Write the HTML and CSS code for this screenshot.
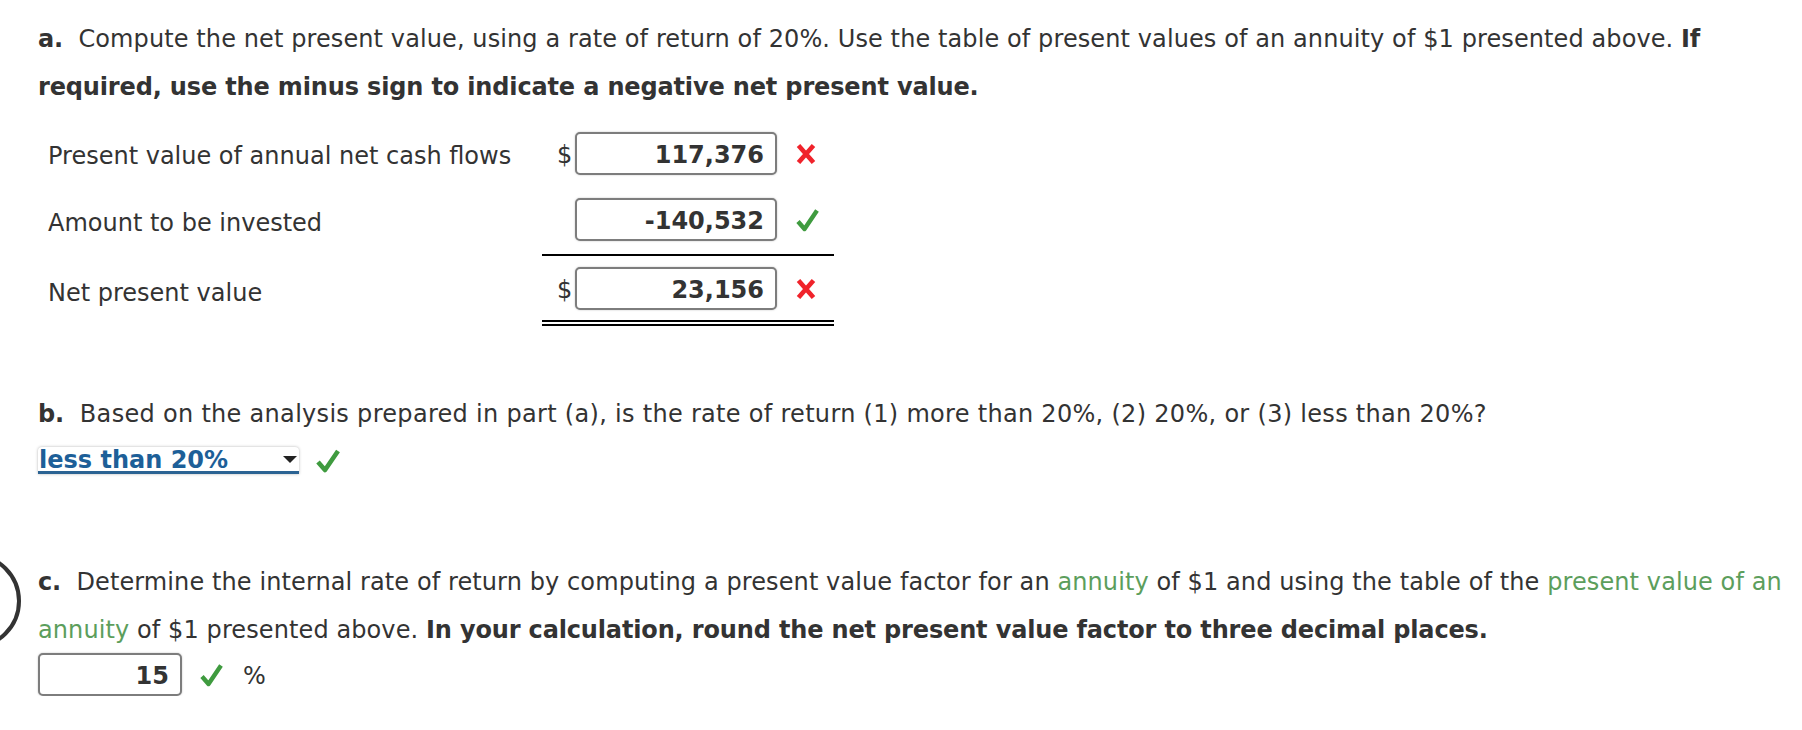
FILE: index.html
```html
<!DOCTYPE html>
<html>
<head>
<meta charset="utf-8">
<link rel="stylesheet" href="styles.css">
</head>
<body>
<svg class="ring" width="30" height="100" viewBox="0 0 30 100"><circle cx="-27" cy="51" r="46" fill="none" stroke="#333" stroke-width="4"/></svg>
<div class="page">
  <section class="part part-a">
    <p class="q"><b>a.</b>&nbsp; Compute the net present value, using a rate of return of 20%. Use the table of present values of an annuity of $1 presented above. <b>If required, use the minus sign to indicate a negative net present value.</b></p>
    <div class="calc">
      <div class="row">
        <div class="label">Present value of annual net cash flows</div>
        <div class="amt">
          <span class="cur">$</span><span class="box">117,376</span>
          <svg class="mark" width="20" height="20" viewBox="0 0 20 20"><path d="M2.5 1.5 L17.5 18.5 M17.5 1.5 L2.5 18.5" stroke="#f0232b" stroke-width="4.6" fill="none"/></svg>
        </div>
      </div>
      <div class="row">
        <div class="label">Amount to be invested</div>
        <div class="amt single">
          <span class="cur"></span><span class="box">-140,532</span>
          <svg class="mark" width="23" height="24" viewBox="0 0 23 24"><path d="M2 13.5 L8.5 21 L21 2.5" stroke="#3f9b3f" stroke-width="4.4" fill="none" stroke-linejoin="round"/></svg>
        </div>
      </div>
      <div class="row">
        <div class="label">Net present value</div>
        <div class="amt double">
          <span class="cur">$</span><span class="box">23,156</span>
          <svg class="mark" width="20" height="20" viewBox="0 0 20 20"><path d="M2.5 1.5 L17.5 18.5 M17.5 1.5 L2.5 18.5" stroke="#f0232b" stroke-width="4.6" fill="none"/></svg>
        </div>
      </div>
    </div>
  </section>

  <section class="part part-b">
    <p class="q"><b>b.</b>&nbsp; Based on the analysis prepared in part (a), is the rate of return (1) more than 20%, (2) 20%, or (3) less than 20%?</p>
    <div class="answer">
      <div class="select"><span class="sel-text">less than 20%</span><span class="caret"></span></div>
      <svg class="mark" width="24" height="25" viewBox="0 0 24 25"><path d="M2 14 L9 22 L22 3" stroke="#3f9b3f" stroke-width="4.6" fill="none" stroke-linejoin="round"/></svg>
    </div>
  </section>

  <section class="part part-c">
    <p class="q"><b>c.</b>&nbsp; Determine the internal rate of return by computing a present value factor for an <span class="term">annuity</span> of $1 and using the table of the <span class="term">present value of an annuity</span> of $1 presented above. <b>In your calculation, round the net present value factor to three decimal places.</b></p>
    <div class="answer c-answer">
      <span class="box small">15</span>
      <svg class="mark" width="23" height="24" viewBox="0 0 23 24"><path d="M2 13.5 L8.5 21 L21 2.5" stroke="#3f9b3f" stroke-width="4.4" fill="none" stroke-linejoin="round"/></svg>
      <span class="unit">%</span>
    </div>
  </section>
</div>
</body>
</html>
```

FILE: styles.css
```css
html, body {
  margin: 0;
  padding: 0;
  background: #fff;
}
body {
  font-family: "DejaVu Sans", Verdana, sans-serif;
  font-size: 24px;
  line-height: 48px;
  color: #333;
  position: relative;
}
.ring {
  position: absolute;
  left: 0;
  top: 550px;
}
.page {
  padding: 13px 12px 0 38px;
}
.q {
  margin: 0;
  padding-top: 2px;
  letter-spacing: 0.1px;
}
.q b {
  font-weight: bold;
  letter-spacing: -0.15px;
}
.part-b .q {
  letter-spacing: 0.3px;
}
.calc {
  margin-top: 10px;
}
.row {
  display: flex;
  align-items: stretch;
}
.label {
  width: 494px;
  padding-left: 10px;
  padding-top: 3px;
  display: flex;
  align-items: center;
}
.amt {
  width: 292px;
  display: flex;
  align-items: center;
  padding: 11px 0 12px 0;
}
.amt.single {
  padding-bottom: 13px;
  border-bottom: 2px solid #000;
}
.amt.double {
  padding-bottom: 10px;
  border-bottom: 6px double #000;
}
.cur {
  width: 18px;
  margin-left: 15px;
  line-height: 40px;
  padding-top: 3px;
}
.box {
  display: inline-block;
  box-sizing: border-box;
  width: 202px;
  height: 43px;
  line-height: 43px;
  border: 2px solid #7d7d7d;
  border-radius: 5px;
  box-shadow: 0 0 2px rgba(0,0,0,0.25);
  text-align: right;
  padding-right: 11px;
  font-weight: bold;
  color: #333;
  background: #fff;
  overflow: hidden;
}
.mark {
  display: block;
  margin-left: 19px;
}
.part-b {
  margin-top: 62px;
}
.answer {
  display: flex;
  align-items: center;
}
.part-b .answer {
  margin-top: 9px;
}
.select {
  box-sizing: border-box;
  width: 261px;
  height: 27px;
  background: #fff;
  border-bottom: 3px solid #2b6393;
  border-radius: 4px 4px 0 0;
  box-shadow: 0 0 3px rgba(0,0,0,0.3);
  color: #1d5f98;
  font-weight: bold;
  display: flex;
  justify-content: space-between;
  align-items: flex-start;
  padding-left: 1px;
  padding-right: 1px;
  overflow: hidden;
}
.sel-text {
  line-height: 24px;
  padding-top: 1px;
}
.caret {
  width: 0;
  height: 0;
  border-left: 7px solid transparent;
  border-right: 7px solid transparent;
  border-top: 7px solid #222;
  margin-right: 1px;
  margin-top: 9px;
}
.part-b .mark {
  margin-left: 17px;
}
.part-c {
  margin-top: 82px;
}
.term {
  color: #5c9e5c;
}
.c-answer {
  margin-top: -1px;
}
.box.small {
  width: 144px;
}
.c-answer .mark {
  margin-left: 18px;
}
.unit {
  margin-left: 20px;
  line-height: 40px;
  padding-top: 3px;
}
```
